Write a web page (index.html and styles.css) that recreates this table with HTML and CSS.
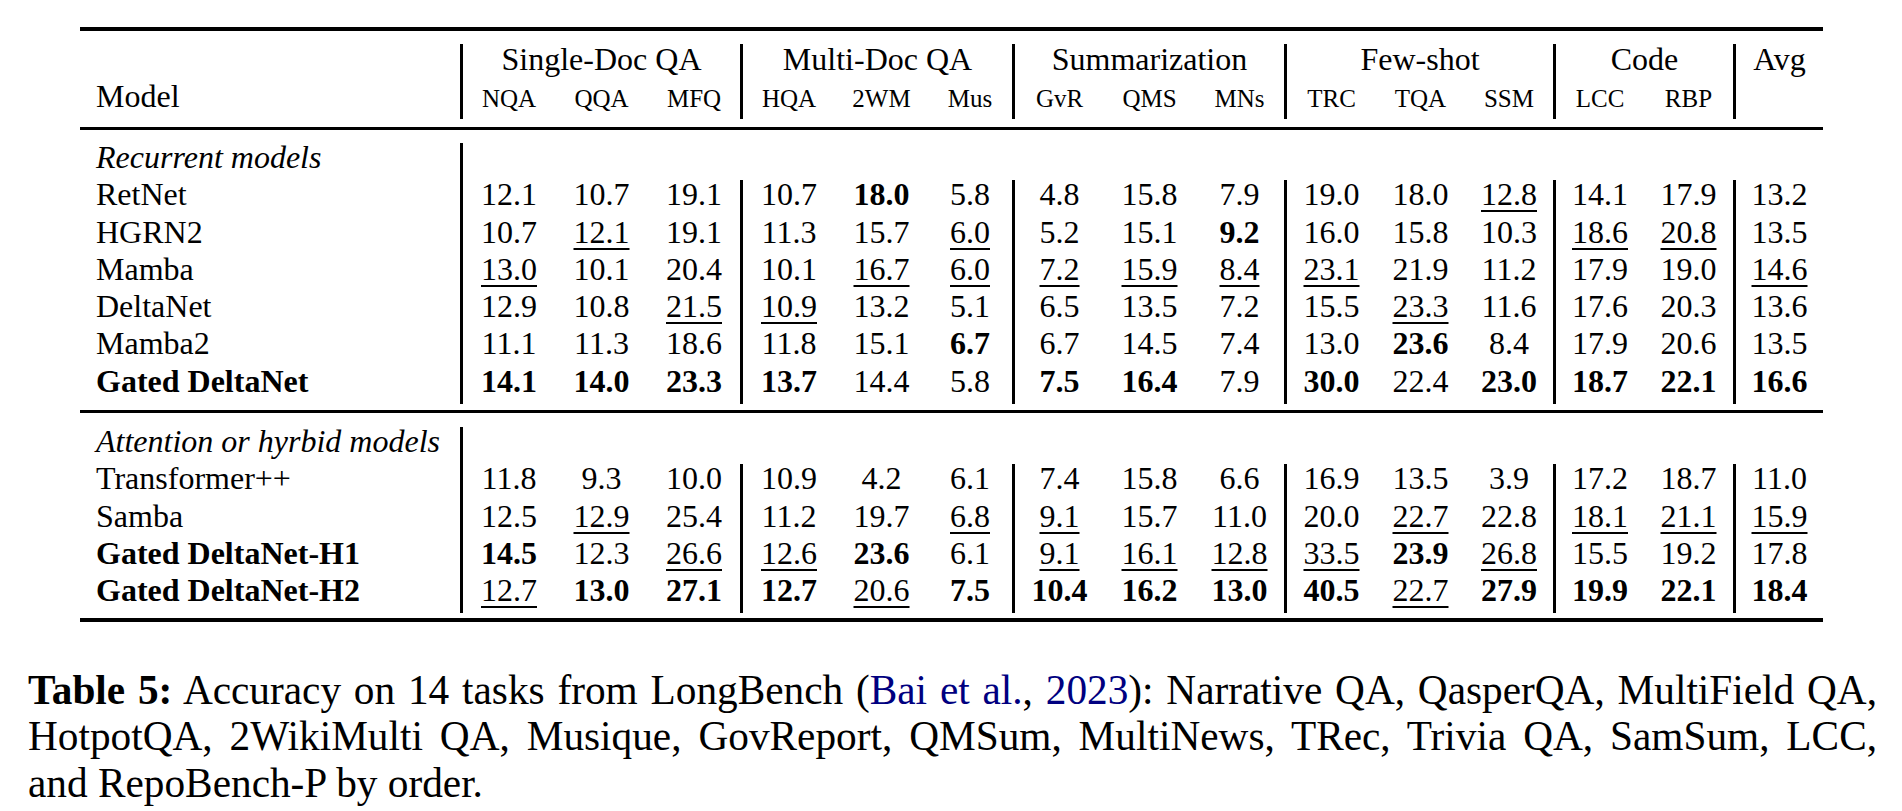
FILE: index.html
```html
<!DOCTYPE html>
<html lang="en">
<head>
<meta charset="utf-8">
<title>Table 5</title>
<link rel="stylesheet" href="styles.css">
</head>
<body>
<div class="figure">
  <div class="tbl">
    <div class="rule heavy"></div>
    <div class="block head">
      <div class="row hrow">
        <div class="name"></div>
        <div class="sep span3">Single-Doc QA</div>
        <div class="sep span3">Multi-Doc QA</div>
        <div class="sep span3">Summarization</div>
        <div class="sep span3">Few-shot</div>
        <div class="sep span2">Code</div>
        <div class="sep">Avg</div>
      </div>
      <div class="row hrow">
        <div class="name">Model</div>
        <div class="sep"><span class="sub">NQA</span></div>
        <div><span class="sub">QQA</span></div>
        <div><span class="sub">MFQ</span></div>
        <div class="sep"><span class="sub">HQA</span></div>
        <div><span class="sub">2WM</span></div>
        <div><span class="sub">Mus</span></div>
        <div class="sep"><span class="sub">GvR</span></div>
        <div><span class="sub">QMS</span></div>
        <div><span class="sub">MNs</span></div>
        <div class="sep"><span class="sub">TRC</span></div>
        <div><span class="sub">TQA</span></div>
        <div><span class="sub">SSM</span></div>
        <div class="sep"><span class="sub">LCC</span></div>
        <div><span class="sub">RBP</span></div>
        <div class="sep"></div>
      </div>
    </div>
    <div class="rule light"></div>
    <div class="block sec1">
      <div class="row">
        <div class="name cat">Recurrent models</div>
        <div class="sep rest"></div>
      </div>
      <div class="row">
        <div class="name">RetNet</div>
        <div class="sep">12.1</div><div>10.7</div><div>19.1</div>
        <div class="sep">10.7</div><div><b>18.0</b></div><div>5.8</div>
        <div class="sep">4.8</div><div>15.8</div><div>7.9</div>
        <div class="sep">19.0</div><div>18.0</div><div><u>12.8</u></div>
        <div class="sep">14.1</div><div>17.9</div>
        <div class="sep">13.2</div>
      </div>
      <div class="row">
        <div class="name">HGRN2</div>
        <div class="sep">10.7</div><div><u>12.1</u></div><div>19.1</div>
        <div class="sep">11.3</div><div>15.7</div><div><u>6.0</u></div>
        <div class="sep">5.2</div><div>15.1</div><div><b>9.2</b></div>
        <div class="sep">16.0</div><div>15.8</div><div>10.3</div>
        <div class="sep"><u>18.6</u></div><div><u>20.8</u></div>
        <div class="sep">13.5</div>
      </div>
      <div class="row">
        <div class="name">Mamba</div>
        <div class="sep"><u>13.0</u></div><div>10.1</div><div>20.4</div>
        <div class="sep">10.1</div><div><u>16.7</u></div><div><u>6.0</u></div>
        <div class="sep"><u>7.2</u></div><div><u>15.9</u></div><div><u>8.4</u></div>
        <div class="sep"><u>23.1</u></div><div>21.9</div><div>11.2</div>
        <div class="sep">17.9</div><div>19.0</div>
        <div class="sep"><u>14.6</u></div>
      </div>
      <div class="row">
        <div class="name">DeltaNet</div>
        <div class="sep">12.9</div><div>10.8</div><div><u>21.5</u></div>
        <div class="sep"><u>10.9</u></div><div>13.2</div><div>5.1</div>
        <div class="sep">6.5</div><div>13.5</div><div>7.2</div>
        <div class="sep">15.5</div><div><u>23.3</u></div><div>11.6</div>
        <div class="sep">17.6</div><div>20.3</div>
        <div class="sep">13.6</div>
      </div>
      <div class="row">
        <div class="name">Mamba2</div>
        <div class="sep">11.1</div><div>11.3</div><div>18.6</div>
        <div class="sep">11.8</div><div>15.1</div><div><b>6.7</b></div>
        <div class="sep">6.7</div><div>14.5</div><div>7.4</div>
        <div class="sep">13.0</div><div><b>23.6</b></div><div>8.4</div>
        <div class="sep">17.9</div><div>20.6</div>
        <div class="sep">13.5</div>
      </div>
      <div class="row">
        <div class="name"><b>Gated DeltaNet</b></div>
        <div class="sep"><b>14.1</b></div><div><b>14.0</b></div><div><b>23.3</b></div>
        <div class="sep"><b>13.7</b></div><div>14.4</div><div>5.8</div>
        <div class="sep"><b>7.5</b></div><div><b>16.4</b></div><div>7.9</div>
        <div class="sep"><b>30.0</b></div><div>22.4</div><div><b>23.0</b></div>
        <div class="sep"><b>18.7</b></div><div><b>22.1</b></div>
        <div class="sep"><b>16.6</b></div>
      </div>
    </div>
    <div class="rule light"></div>
    <div class="block sec2">
      <div class="row">
        <div class="name cat">Attention or hyrbid models</div>
        <div class="sep rest"></div>
      </div>
      <div class="row">
        <div class="name">Transformer++</div>
        <div class="sep">11.8</div><div>9.3</div><div>10.0</div>
        <div class="sep">10.9</div><div>4.2</div><div>6.1</div>
        <div class="sep">7.4</div><div>15.8</div><div>6.6</div>
        <div class="sep">16.9</div><div>13.5</div><div>3.9</div>
        <div class="sep">17.2</div><div>18.7</div>
        <div class="sep">11.0</div>
      </div>
      <div class="row">
        <div class="name">Samba</div>
        <div class="sep">12.5</div><div><u>12.9</u></div><div>25.4</div>
        <div class="sep">11.2</div><div>19.7</div><div><u>6.8</u></div>
        <div class="sep"><u>9.1</u></div><div>15.7</div><div>11.0</div>
        <div class="sep">20.0</div><div><u>22.7</u></div><div>22.8</div>
        <div class="sep"><u>18.1</u></div><div><u>21.1</u></div>
        <div class="sep"><u>15.9</u></div>
      </div>
      <div class="row">
        <div class="name"><b>Gated DeltaNet-H1</b></div>
        <div class="sep"><b>14.5</b></div><div>12.3</div><div><u>26.6</u></div>
        <div class="sep"><u>12.6</u></div><div><b>23.6</b></div><div>6.1</div>
        <div class="sep"><u>9.1</u></div><div><u>16.1</u></div><div><u>12.8</u></div>
        <div class="sep"><u>33.5</u></div><div><b>23.9</b></div><div><u>26.8</u></div>
        <div class="sep">15.5</div><div>19.2</div>
        <div class="sep">17.8</div>
      </div>
      <div class="row">
        <div class="name"><b>Gated DeltaNet-H2</b></div>
        <div class="sep"><u>12.7</u></div><div><b>13.0</b></div><div><b>27.1</b></div>
        <div class="sep"><b>12.7</b></div><div><u>20.6</u></div><div><b>7.5</b></div>
        <div class="sep"><b>10.4</b></div><div><b>16.2</b></div><div><b>13.0</b></div>
        <div class="sep"><b>40.5</b></div><div><u>22.7</u></div><div><b>27.9</b></div>
        <div class="sep"><b>19.9</b></div><div><b>22.1</b></div>
        <div class="sep"><b>18.4</b></div>
      </div>
    </div>
    <div class="rule heavy"></div>
  </div>
  <p class="caption">
    <span class="cap-line"><b>Table 5:</b> Accuracy on 14 tasks from LongBench (<span class="cite">Bai et al.</span>, <span class="cite">2023</span>): Narrative QA, QasperQA, MultiField QA,</span>
    <span class="cap-line">HotpotQA, 2WikiMulti QA, Musique, GovReport, QMSum, MultiNews, TRec, Trivia QA, SamSum, LCC,</span>
    <span class="cap-line last">and RepoBench-P by order.</span>
  </p>
</div>
</body>
</html>
```

FILE: styles.css
```css
html, body {
  margin: 0;
  padding: 0;
  background: #ffffff;
}

.figure {
  padding-top: 27px;
  font-family: "Liberation Serif", "Times New Roman", serif;
  color: #000;
}

.tbl {
  width: 1743px;
  margin-left: 80px;
  font-size: 32px;
}

.rule {
  background: #000;
}
.rule.heavy { height: 4px; }
.rule.light { height: 3px; }

.block.head { padding: 13px 0 8px; }
.block.sec1 { padding: 13.5px 0 6.25px; }
.block.sec2 { padding: 14px 0 5px; }

.row {
  display: grid;
  grid-template-columns: 380px 95px 93px 92px 95px 93px 84px 92px 91px 89px 92px 89px 88px 91px 89px 90px;
  grid-auto-rows: 37.25px;
  line-height: 29.4px;
}

.row > div {
  text-align: center;
  white-space: nowrap;
}

.row > .name {
  text-align: left;
  padding-left: 16px;
}

.hrow > div {
  padding-top: 1px;
}

.sep {
  border-left: 3px solid #000;
}

.span3 { grid-column: span 3; }
.span2 { grid-column: span 2; }
.rest { grid-column: span 15; }

.sub {
  font-size: 25px;
  line-height: 1;
}

.cat {
  font-style: italic;
}

b {
  font-weight: bold;
}

u {
  text-decoration: underline;
  text-decoration-thickness: 2px;
  text-underline-offset: 5px;
}

.caption {
  margin: 44.5px 0 0 28px;
  width: 1849px;
  font-size: 41.3px;
  line-height: 46.5px;
}

.cap-line {
  display: block;
  text-align: justify;
  text-align-last: justify;
}

.cap-line.last {
  text-align-last: left;
}

.cite {
  color: #000080;
}
```
